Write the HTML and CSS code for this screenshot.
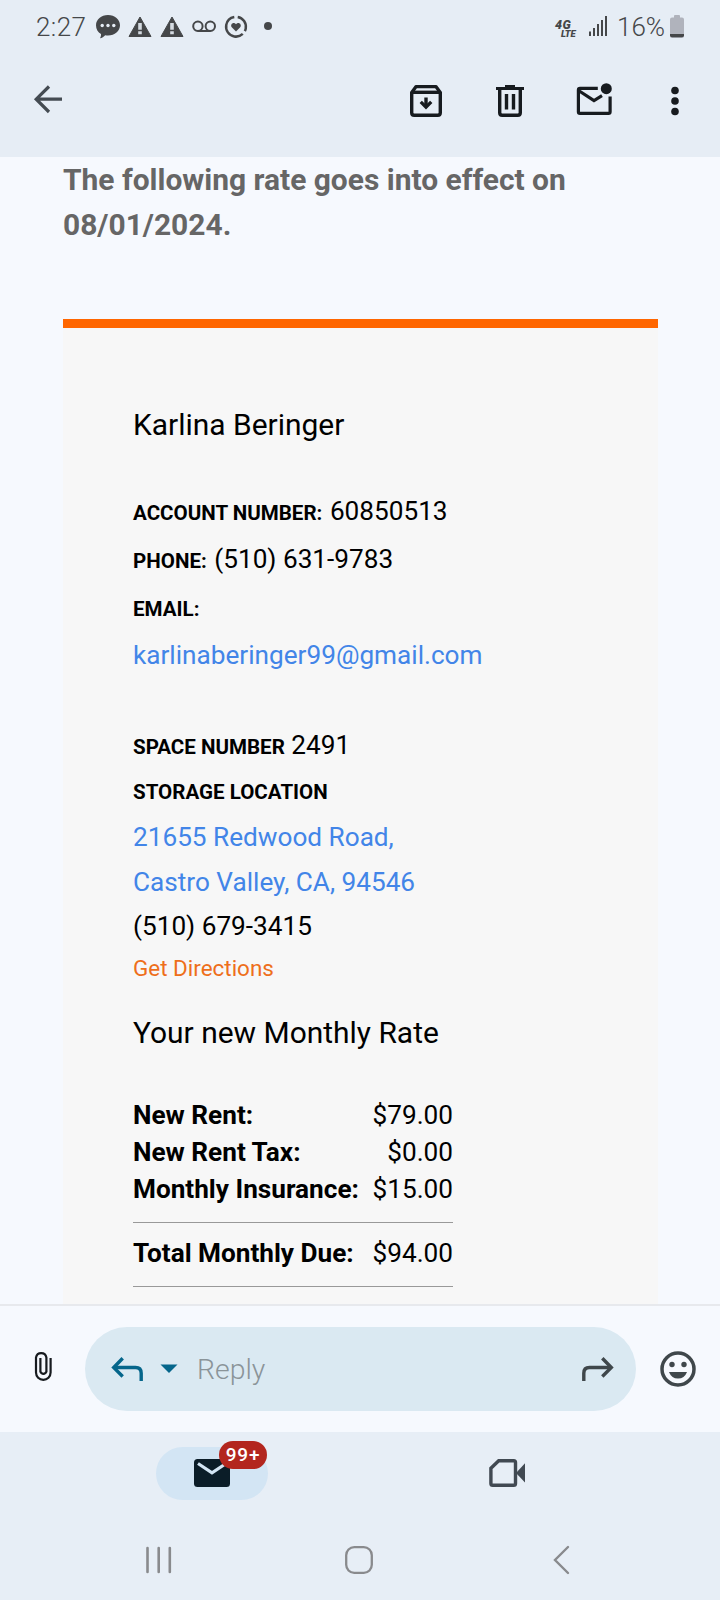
FILE: index.html
```html
<!DOCTYPE html>
<html lang="en">
<head>
<meta charset="utf-8">
<title>Mail</title>
<link rel="stylesheet" href="styles.css">
</head>
<body>
<div class="screen">
  <header class="top">
    <div class="status">
      <span class="clock">2:27</span>
      <svg class="st-left" width="156" height="28" viewBox="94 12 156 28" fill="#454749">
        <path d="M108 15c6.800 0 12 4.400 12 10.200S114.800 35.500 108 35.500c-1 0-2-.1-2.800-.3-1.400 1.600-3.200 2.800-5.200 3 .8-1.100 1.100-2.500 1-4.100-3.100-1.900-5-5-5-8.900C96 19.400 101.200 15 108 15z"/>
        <g fill="#e6edf5"><circle cx="102.200" cy="25.500" r="1.700"/><circle cx="108" cy="25.500" r="1.700"/><circle cx="113.800" cy="25.500" r="1.700"/></g>
        <path d="M140 17l11 19.500h-22z" stroke="#454749" stroke-width="1" stroke-linejoin="round"/>
        <path d="M138.200 23h3.600v6.800h-3.600zM138.200 31.300h3.600v3h-3.600z" fill="#d5dbe2"/>
        <path d="M172 17l11 19.500h-22z" stroke="#454749" stroke-width="1" stroke-linejoin="round"/>
        <path d="M170.200 23h3.600v6.800h-3.600zM170.200 31.300h3.600v3h-3.600z" fill="#d5dbe2"/>
        <g fill="none" stroke="#454749" stroke-width="2"><circle cx="197.900" cy="26.200" r="4.700"/><circle cx="210.300" cy="26.200" r="4.700"/><path d="M197.900 31h12.400"/></g>
        <circle cx="236" cy="26.700" r="9.900" fill="none" stroke="#454749" stroke-width="2.500" pathLength="360" stroke-dasharray="107 20 213 20" transform="rotate(-80 236 26.700)"/>
        <path d="M236 31.400l-4-3.900c-2.600-2.900 1.600-6.300 4-3.300 2.400-3 6.600.4 4 3.300z"/>
      </svg>
      <span class="more-dot"></span>
      <div class="lte"><span class="g4">4G</span><span class="l">LTE</span></div>
      <svg class="signal" width="18" height="20" viewBox="589 16 18 20" fill="#454749"><path d="M589 31.500h2V36h-2zM593 28h2v8h-2zM597 24h2v12h-2zM601 20h2v16h-2zM605 16h2v20h-2z"/></svg>
      <span class="pct">16%</span>
      <svg class="batt" width="14" height="23" viewBox="0 0 14 23"><path d="M4 2.500V1Q4 0 5 0H9Q10 0 10 1V2.500H12Q14 2.500 14 4.500V21Q14 23 12 23H2Q0 23 0 21V4.500Q0 2.500 2 2.500Z" fill="#b0b3bc"/><path d="M0 19h14v1.500q0 1.800-2 1.800H2q-2 0-2-1.800z" fill="#454749"/></svg>
    </div>
    <nav class="appbar">
      <svg class="back" width="30" height="30" viewBox="33 84 30 30" fill="none" stroke="#444b52" stroke-width="3.200"><path d="M49 86.500L36.200 99.200 49 112M36 99.200h26"/></svg>
      <svg class="archive" width="32" height="32" viewBox="410 85 32 32" fill="none" stroke="#171b1f" stroke-width="3.400"><path d="M411.700 92.500v20.300q0 2.500 2.500 2.500h23.600q2.500 0 2.500-2.500V92.500l-4-5.500q-.4-.4-1-.4h-18.600q-.6 0-1 .4z"/><path d="M412 92.300h28"/><path d="M426 97.500v8"/><path d="M419.600 103l2.300-2.300 4.100 4 4.100-4 2.300 2.300-6.400 6.500z" fill="#171b1f" stroke="none"/></svg>
      <svg class="trash" width="28" height="32" viewBox="496 85 28 32" fill="none" stroke="#171b1f" stroke-width="3.400"><path d="M499.700 90v22.800q0 2.500 2.500 2.500h15.600q2.500 0 2.500-2.500V90"/><path d="M496 88.500h28" stroke-width="3"/><path d="M505 86h10" stroke-width="2"/><path d="M506.500 94v15.500M513.500 94v15.500"/></svg>
      <svg class="unread" width="36" height="33" viewBox="576 83 36 33" fill="none" stroke="#171b1f" stroke-width="3.200"><path d="M597.800 88.300H580q-1.600 0-1.600 1.600v21.900q0 1.600 1.600 1.600h28.500q1.600 0 1.600-1.600V96.500"/><path d="M578.500 90.500l15.500 10 8-4.800"/><circle cx="606.300" cy="88.700" r="5.500" fill="#171b1f" stroke="none"/></svg>
      <svg class="dots" width="8" height="30" viewBox="671 86 8 30" fill="#171b1f"><circle cx="675" cy="90.500" r="3.800"/><circle cx="675" cy="101" r="3.800"/><circle cx="675" cy="111.500" r="3.800"/></svg>
    </nav>
  </header>

  <main class="mail">
    <p class="notice">The following rate goes into effect on 08/01/2024.</p>
    <section class="card">
      <h2 class="name">Karlina Beringer</h2>
      <div class="account">
        <div><b>ACCOUNT NUMBER:</b> 60850513</div>
        <div><b>PHONE:</b> (510) 631-9783</div>
        <div><b>EMAIL:</b></div>
        <div class="link">karlinaberinger99@gmail.com</div>
      </div>
      <div class="space">
        <div><b>SPACE NUMBER</b> 2491</div>
        <div class="loc"><b>STORAGE LOCATION</b></div>
        <div class="link">21655 Redwood Road,</div>
        <div class="link">Castro Valley, CA, 94546</div>
        <div class="tel">(510) 679-3415</div>
        <div class="directions">Get Directions</div>
      </div>
      <h2 class="rate-title">Your new Monthly Rate</h2>
      <div class="rates">
        <div class="row"><strong>New Rent:</strong><span>$79.00</span></div>
        <div class="row"><strong>New Rent Tax:</strong><span>$0.00</span></div>
        <div class="row"><strong>Monthly Insurance:</strong><span>$15.00</span></div>
        <div class="rule"></div>
        <div class="row"><strong>Total Monthly Due:</strong><span>$94.00</span></div>
        <div class="rule"></div>
      </div>
    </section>
  </main>

  <div class="replybar">
    <svg class="clip" width="18" height="30" viewBox="34 1351 18 30" fill="none" stroke="#171b1f" stroke-width="2.200"><path d="M50.600 1358v14.500a7.300 7.300 0 0 1-14.600 0v-15a5.300 5.300 0 0 1 10.400 0v14.200a3.200 3.200 0 0 1-6 0V1358"/></svg>
    <div class="pill">
      <svg class="reply" width="32" height="26" viewBox="111 1356 32 26" fill="none" stroke="#05668b" stroke-width="3.400"><path d="M122.700 1358.300l-9 9.200 9 9"/><path d="M114 1367.500h21.500q5.700 0 5.700 5.700v7.800"/></svg>
      <svg class="caret" width="18" height="10" viewBox="0 0 18 10"><path d="M.5.500h17L9 9z" fill="#05668b"/></svg>
      <span class="hint">Reply</span>
      <svg class="forward" width="32" height="26" viewBox="111 1356 32 26" fill="none" stroke="#3f474b" stroke-width="3.400"><g transform="translate(254 0) scale(-1 1)"><path d="M122.700 1358.300l-9 9.200 9 9"/><path d="M114 1367.500h21.500q5.700 0 5.700 5.700v7.800"/></g></svg>
    </div>
    <svg class="emoji" width="36" height="36" viewBox="660 1351 36 36" fill="#3f474b"><circle cx="678" cy="1369" r="16" fill="none" stroke="#3f474b" stroke-width="3.500"/><circle cx="672" cy="1364.500" r="2.700"/><circle cx="684" cy="1364.500" r="2.700"/><path d="M669 1372h18q-2.500 6.600-9 6.600t-9-6.600z"/></svg>
  </div>

  <footer class="bottom">
    <div class="tabs">
      <div class="tab-mail">
        <svg width="36" height="28" viewBox="0 0 36 28"><rect width="36" height="28" rx="3.500" fill="#0b1d28"/><path d="M4 4.500l14 9.300L32 4.500" fill="none" stroke="#d3e5f4" stroke-width="3.200"/></svg>
        <span class="badge">99+</span>
      </div>
      <svg class="video" width="36" height="28" viewBox="489 1459 36 28" fill="none" stroke="#414952" stroke-width="3.400"><path d="M498.700 1460.700h15q1.800 0 1.800 1.800v21q0 1.800-1.800 1.800h-21q-1.800 0-1.800-1.800v-15.300z"/><path d="M516 1473l9-9.800v19.300z" fill="#414952" stroke="none"/></svg>
    </div>
    <div class="sysnav">
      <svg class="recents" width="26" height="28" viewBox="0 0 26 28" stroke="#898a8d" stroke-width="2.600" stroke-linecap="round"><path d="M1.500 2v24M12.700 2v24M23.800 2v24"/></svg>
      <svg class="home" width="28" height="28" viewBox="0 0 28 28"><rect x="1.200" y="1.200" width="25.600" height="25.600" rx="8" fill="none" stroke="#898a8d" stroke-width="2.300"/></svg>
      <svg class="sysback" width="17" height="30" viewBox="0 0 17 30" fill="none" stroke="#898a8d" stroke-width="2.400" stroke-linecap="round"><path d="M15 2L2 15l13 13"/></svg>
    </div>
  </footer>
</div>
</body>
</html>
```
FILE: styles.css
```css
* { box-sizing: border-box; }
body { margin: 0; font-family: Roboto, "Liberation Sans", sans-serif; }
svg { display: block; flex: none; }
h2, p { margin: 0; font-weight: 400; }

.screen { width: 720px; height: 1600px; display: flex; flex-direction: column; overflow: hidden; background: #f6f9fe; }

.top { height: 157px; flex: none; background: #e6edf5; }
.status { height: 54px; display: flex; align-items: flex-start; padding-left: 36px; color: #454749; font-size: 26px; }
.clock { width: 58px; padding-top: 12px; line-height: 30px; font-weight: 300; letter-spacing: .4px; }
.st-left { margin-top: 12px; }
.more-dot { width: 8px; height: 8px; margin: 22px 0 0 14px; border-radius: 50%; background: #454749; }
.lte { width: 22px; height: 18px; margin: 20px 0 0 283px; display: flex; flex-direction: column; font-weight: 900; font-style: italic; }
.g4 { height: 9px; font-size: 12.5px; line-height: 9px; letter-spacing: .5px; }
.l { height: 8px; padding-left: 6px; font-size: 9.5px; line-height: 9px; letter-spacing: -.2px; }
.signal { margin: 16px 0 0 12px; }
.pct { width: 53px; margin-left: 10px; padding-top: 12px; line-height: 30px; font-weight: 300; white-space: nowrap; }
.batt { margin: 15px 0 0 0; }

.appbar { height: 103px; display: flex; align-items: flex-start; padding-left: 33px; }
.back { margin-top: 30px; }
.archive { margin: 31px 0 0 347px; }
.trash { margin: 31px 0 0 54px; }
.unread { margin: 29px 0 0 52px; }
.dots { margin: 32px 0 0 59px; }

.mail { height: 1147px; flex: none; padding: 0 62px 0 63px; overflow: hidden; }
.notice { height: 162px; font-size: 29.94px; line-height: 45px; font-weight: 700; color: #666; }
.card { height: 1000px; padding: 74px 0 0 70px; border-top: 9px solid #f60; background: #f7f7f7; color: #000; font-size: 26.18px; }
.name { font-size: 29.94px; line-height: 46px; }
.card b { font-size: 20.55px; line-height: 1; font-weight: 700; }
.link { color: #4285e8; }
.account { margin-top: 39px; line-height: 48px; }
.account b { margin-right: 1px; }
.space { margin-top: 44px; line-height: 45px; }
.loc { margin-bottom: 2px; }
.tel { line-height: 43px; }
.directions { font-size: 22.45px; line-height: 40px; color: #ee6f1b; }
.rate-title { margin-top: 22px; font-size: 29.94px; line-height: 46px; }
.rates { width: 320px; margin-top: 41px; }
.row { display: flex; justify-content: space-between; line-height: 37px; white-space: nowrap; }
.rule { height: 1px; margin: 14px 0 12px; background: #999; }

.replybar { height: 128px; flex: none; display: flex; align-items: center; border-top: 2px solid #e7e9ed; padding-left: 34px; }
.clip { margin-bottom: 6px; }
.pill { width: 551px; height: 84px; margin: 0 24px 0 33px; border-radius: 42px; background: #dae9f2; display: flex; align-items: center; padding-left: 26px; }
.caret { margin-left: 17px; }
.hint { width: 185px; margin-left: 19px; font-size: 28.4px; font-weight: 300; color: #8a9499; }
.forward { margin-left: 200px; }

.bottom { height: 168px; flex: none; background: #e7eef6; }
.tabs { height: 82px; display: flex; align-items: flex-start; padding-left: 156px; }
.tab-mail { position: relative; width: 112px; height: 53px; margin-top: 15px; border-radius: 27px; background: #d3e5f4; padding: 12px 0 0 38px; }
.badge { position: absolute; left: 63px; top: -6px; width: 48px; height: 28px; border-radius: 14px; background: #b3261e; color: #fff; font-size: 19px; line-height: 28px; font-weight: 500; text-align: center; letter-spacing: .8px; }
.video { margin: 27px 0 0 221px; }
.sysnav { height: 86px; display: flex; align-items: flex-start; padding-left: 146px; }
.recents { margin-top: 32px; }
.home { margin: 32px 0 0 173px; }
.sysback { margin: 31px 0 0 180px; }
```
